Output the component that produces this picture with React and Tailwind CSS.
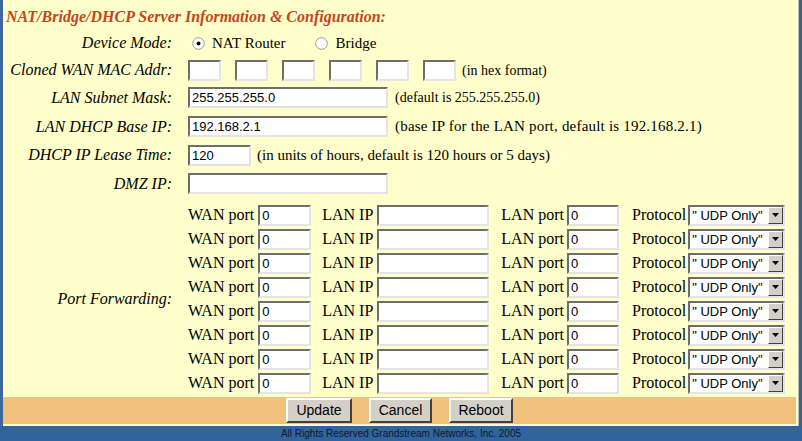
import React from "react";

const serif = "font-['Liberation_Serif','Times_New_Roman',serif]";
const sans = "font-['Liberation_Sans',Arial,sans-serif]";

const inset =
  "bg-white border-2 border-t-[#6e6e6e] border-l-[#6e6e6e] border-b-[#e4e4e4] border-r-[#e4e4e4] h-[21px] px-[2px] text-[13px] leading-[17px] text-black " +
  sans;

const Field = ({ w, value = "" }) => (
  <div className={inset} style={{ width: w }}>
    {value}
  </div>
);

const Radio = ({ checked }) => (
  <svg width="13" height="13" viewBox="0 0 13 13">
    <circle cx="6.5" cy="6.5" r="5.8" fill="#fff" stroke="#9a9a9a" strokeWidth="1" />
    {checked && <circle cx="6.5" cy="6.5" r="2" fill="#000" />}
  </svg>
);

const Select = () => (
  <div className="w-[97px] h-[21px] bg-white border-2 border-t-[#6e6e6e] border-l-[#6e6e6e] border-b-[#e4e4e4] border-r-[#e4e4e4] flex items-stretch">
    <div className={"flex-1 pl-[2px] text-[13px] leading-[17px] text-black whitespace-nowrap " + sans}>" UDP Only"</div>
    <div className="w-[15px] bg-[#d4d0c8] border border-t-white border-l-white border-b-[#404040] border-r-[#404040] flex items-center justify-center">
      <svg width="7" height="4" viewBox="0 0 7 4">
        <path d="M0 0H7L3.5 4Z" fill="#000" />
      </svg>
    </div>
  </div>
);

const Row = ({ label, h, children }) => (
  <div className="flex items-center" style={{ height: h }}>
    <div className={"w-[169px] text-right italic text-[16px] whitespace-nowrap " + serif}>{label}</div>
    <div className="ml-[16px] flex items-center">{children}</div>
  </div>
);

const Button = ({ w, children }) => (
  <div
    className={
      "h-[25px] bg-[#d4d0c8] border-2 border-t-white border-l-white border-b-[#404040] border-r-[#404040] flex items-center justify-center text-[14px] text-black " +
      sans
    }
    style={{ width: w }}
  >
    {children}
  </div>
);

export default function App() {
  const ports = [0, 1, 2, 3, 4, 5, 6, 7];
  return (
    <div className="w-[802px] h-[441px] flex flex-col bg-[#31639c] overflow-hidden">
      <div className="h-[426px] flex border-l-[3px] border-l-[#3f68a0]">
        <div className="flex-1 flex flex-col bg-[#ffffcc]">
          <div className="flex-1 flex flex-col text-black">
            <div className={"h-[29px] pt-[7px] pl-[3px] leading-[20px] text-[16px] font-bold italic text-[#c4461a] " + serif}>
              NAT/Bridge/DHCP Server Information &amp; Configuration:
            </div>
            <Row label="Device Mode:" h={28}>
              <div className={"flex items-center text-[15px] " + serif}>
                <span className="ml-[4px]"><Radio checked /></span>
                <span className="ml-[7px]">NAT Router</span>
                <span className="ml-[30px]"><Radio /></span>
                <span className="ml-[7px]">Bridge</span>
              </div>
            </Row>
            <Row label="Cloned WAN MAC Addr:" h={26}>
              <div className="flex items-center gap-[14px]">
                <Field w={33} />
                <Field w={33} />
                <Field w={33} />
                <Field w={33} />
                <Field w={33} />
                <Field w={33} />
              </div>
              <span className={"ml-[6px] text-[14px] " + serif}>(in hex format)</span>
            </Row>
            <Row label="LAN Subnet Mask:" h={29}>
              <Field w={200} value="255.255.255.0" />
              <span className={"ml-[7px] text-[14px] " + serif}>(default is 255.255.255.0)</span>
            </Row>
            <Row label="LAN DHCP Base IP:" h={29}>
              <Field w={200} value="192.168.2.1" />
              <span className={"ml-[7px] text-[15px] tracking-[0.2px] " + serif}>(base IP for the LAN port, default is 192.168.2.1)</span>
            </Row>
            <Row label="DHCP IP Lease Time:" h={28}>
              <Field w={63} value="120" />
              <span className={"ml-[6px] text-[15px] " + serif}>(in units of hours, default is 120 hours or 5 days)</span>
            </Row>
            <Row label="DMZ IP:" h={29}>
              <Field w={200} />
            </Row>
            <div className="mt-[5px] flex items-center">
              <div className={"w-[169px] text-right italic text-[16px] " + serif}>Port Forwarding:</div>
              <div className="ml-[16px] flex flex-col">
                {ports.map((p) => (
                  <div key={p} className={"h-[24px] flex items-center text-[16px] whitespace-nowrap " + serif}>
                    <span>WAN port</span>
                    <span className="ml-[4px]"><Field w={53} value="0" /></span>
                    <span className="ml-[11px]">LAN IP</span>
                    <span className="ml-[4px]"><Field w={112} /></span>
                    <span className="ml-[12px]">LAN port</span>
                    <span className="ml-[3px]"><Field w={52} value="0" /></span>
                    <span className="ml-[13px]">Protocol</span>
                    <span className="ml-[2px]"><Select /></span>
                  </div>
                ))}
              </div>
            </div>
          </div>
          <div className="h-[29px] bg-[#f2c27c] flex items-center justify-center gap-[17px] border-b-2 border-b-[#ffffcc] mr-[2px]">
            <Button w={66}>Update</Button>
            <Button w={63}>Cancel</Button>
            <Button w={64}>Reboot</Button>
          </div>
        </div>
        <div className="w-[1px] bg-[#b8c0c8]" />
        <div className="w-[3px] bg-[#4b5f72]" />
      </div>
      <div className={"h-[15px] flex items-center justify-center text-[10px] text-[#0a1a30] " + sans}>
        All Rights Reserved Grandstream Networks, Inc. 2005
      </div>
    </div>
  );
}
